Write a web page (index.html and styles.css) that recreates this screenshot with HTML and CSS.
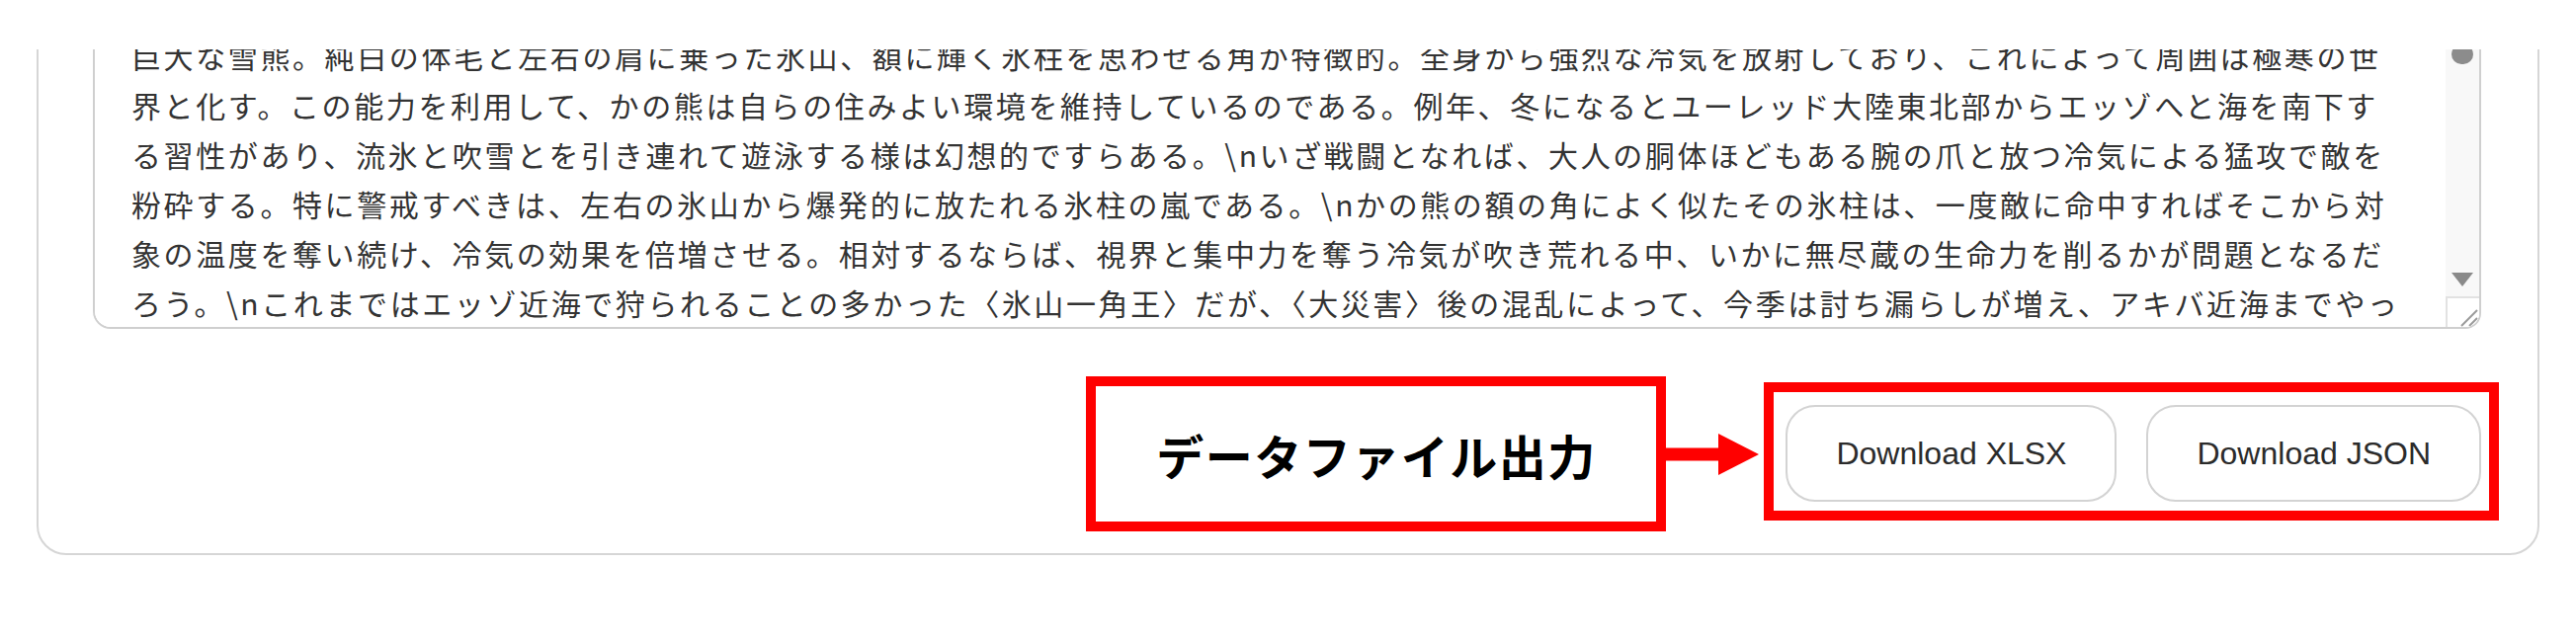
FILE: index.html
```html
<!DOCTYPE html>
<html lang="ja">
  <head>
    <meta charset="UTF-8" />
    <meta name="viewport" content="width=device-width, initial-scale=1.0" />
    <title>データファイル出力</title>
    <link rel="stylesheet" href="styles.css">
  </head>
  <body>
    <div class="shot">
      <section class="card">
        <div class="editor">
          <textarea class="editor-text" wrap="off" readonly>巨大な雪熊。純白の体毛と左右の肩に乗った氷山、額に輝く氷柱を思わせる角が特徴的。全身から強烈な冷気を放射しており、これによって周囲は極寒の世
界と化す。この能力を利用して、かの熊は自らの住みよい環境を維持しているのである。例年、冬になるとユーレッド大陸東北部からエッゾへと海を南下す
る習性があり、流氷と吹雪とを引き連れて遊泳する様は幻想的ですらある。\nいざ戦闘となれば、大人の胴体ほどもある腕の爪と放つ冷気による猛攻で敵を
粉砕する。特に警戒すべきは、左右の氷山から爆発的に放たれる氷柱の嵐である。\nかの熊の額の角によく似たその氷柱は、一度敵に命中すればそこから対
象の温度を奪い続け、冷気の効果を倍増させる。相対するならば、視界と集中力を奪う冷気が吹き荒れる中、いかに無尽蔵の生命力を削るかが問題となるだ
ろう。\nこれまではエッゾ近海で狩られることの多かった〈氷山一角王〉だが、〈大災害〉後の混乱によって、今季は討ち漏らしが増え、アキバ近海までやっ</textarea>
          <div class="scrollbar">
            <div class="sb-up"></div>
            <div class="sb-thumb"></div>
            <div class="sb-track"></div>
            <div class="sb-down">
              <svg width="22" height="14" viewBox="0 0 22 14"><polygon points="0,0 22,0 11,14" fill="#8a8a8a" /></svg>
            </div>
            <div class="sb-corner">
              <svg width="32" height="30" viewBox="0 0 32 30">
                <line x1="14" y1="29" x2="30" y2="13" stroke="#9a9a9a" stroke-width="2" />
                <line x1="22" y1="29" x2="30" y2="21" stroke="#9a9a9a" stroke-width="2" />
              </svg>
            </div>
          </div>
        </div>

        <div class="export-row">
          <div class="note-box">データファイル出力</div>
          <svg class="note-arrow" width="94" height="42" viewBox="0 0 94 42">
            <rect x="0" y="14.5" width="54" height="13" fill="#ff0000" />
            <polygon points="53,0 94,21 53,42" fill="#ff0000" />
          </svg>
          <div class="note-frame">
            <button type="button" class="btn btn-xlsx">Download XLSX</button>
            <button type="button" class="btn btn-json">Download JSON</button>
          </div>
        </div>
      </section>
    </div>
  </body>
</html>
```

FILE: styles.css
```css
html,
body {
  margin: 0;
  padding: 0;
  background: #fff;
}
body {
  font-family: "Liberation Sans", Arial, sans-serif;
  color: #333;
}

/* screenshot is cut: top 50px left blank */
.shot {
  margin-top: 50px;
  height: 601px;
  overflow: hidden;
}

.card {
  margin: -79px 37px 0;
  padding: 40px 57px 22px 55px;
  border: 2px solid #d6d6d6;
  border-radius: 30px;
  background: #fff;
}

/* textarea */
.editor {
  display: flex;
  border: 2px solid #cfcfcf;
  border-radius: 18px 16px 16px 18px;
  overflow: hidden;
  background: #fff;
}
.editor-text {
  flex: 1;
  display: block;
  height: 316px;
  box-sizing: border-box;
  margin: 0;
  padding: 16px 0 0 37px;
  border: 0;
  outline: none;
  resize: none;
  overflow: hidden;
  white-space: pre;
  font-family: "Noto Sans CJK JP", sans-serif;
  font-size: 30px;
  line-height: 50px;
  letter-spacing: 2.6px;
  color: #333;
  background: #fff;
}

.scrollbar {
  width: 34px;
  display: flex;
  flex-direction: column;
  background: #f8f8f8;
}
.sb-up {
  height: 30px;
}
.sb-thumb {
  width: 22px;
  height: 20px;
  margin: 0 auto;
  border-radius: 11px;
  background: #8c8c8c;
}
.sb-track {
  flex: 1;
}
.sb-down {
  height: 34px;
  display: flex;
  align-items: center;
  justify-content: center;
}
.sb-corner {
  height: 31px;
  box-sizing: border-box;
  border-top: 2px solid #e2e2e2;
  border-left: 2px solid #e2e2e2;
  background: #fff;
  display: flex;
  align-items: flex-end;
  justify-content: flex-end;
}
.sb-corner svg {
  display: block;
}

/* export row */
.export-row {
  display: flex;
  justify-content: flex-end;
  align-items: center;
  margin-top: 48px;
}

.note-box {
  width: 587px;
  height: 157px;
  box-sizing: border-box;
  border: 10px solid #ff0000;
  display: flex;
  align-items: center;
  justify-content: center;
  font-family: "Noto Sans CJK JP", sans-serif;
  font-weight: bold;
  font-size: 48px;
  letter-spacing: 1.5px;
  color: #000;
}

.note-arrow {
  display: block;
  flex-shrink: 0;
}

.note-frame {
  display: flex;
  gap: 30px;
  margin: 0 -18px 5px 5px;
  padding: 13px 8px 9px 12px;
  border: 10px solid #ff0000;
}

.btn {
  height: 98px;
  padding: 0 49px;
  border: 2px solid #d3d3d3;
  border-radius: 30px;
  background: #fff;
  font-family: "Liberation Sans", Arial, sans-serif;
  font-size: 32px;
  color: #2b2b2b;
  cursor: pointer;
}
```
